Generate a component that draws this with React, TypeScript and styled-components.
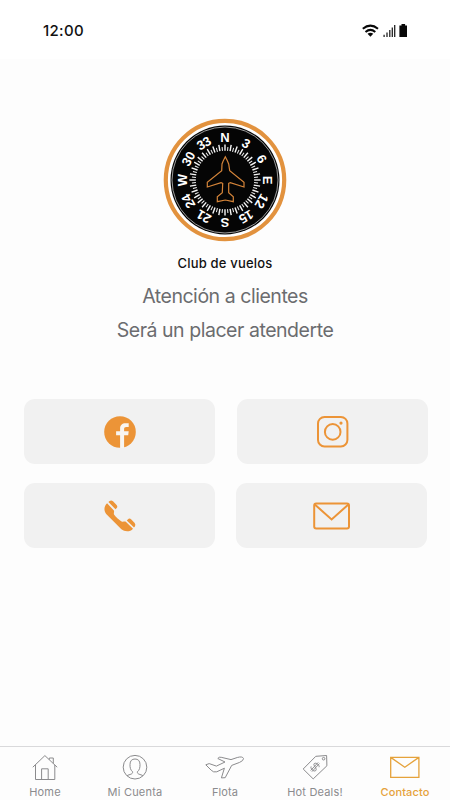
import React from "react";
import styled, { createGlobalStyle } from "styled-components";

const ORANGE = "#ec9437";

const GlobalStyle = createGlobalStyle`
  * { box-sizing: border-box; }
  body { margin: 0; background: #fdfdfd; font-family: Inter, "Liberation Sans", sans-serif; }
  svg { display: block; flex: none; }
`;

const Screen = styled.div`
  width: 450px;
  height: 800px;
  display: flex;
  flex-direction: column;
  background: #fdfdfd;
  overflow: hidden;
`;

const StatusBar = styled.header`
  height: 59px;
  padding: 2px 42px 0 43px;
  display: flex;
  align-items: center;
  justify-content: space-between;
  background: #fff;
`;

const Clock = styled.time`
  font-size: 15px;
  font-weight: 500;
  letter-spacing: 0.3px;
  line-height: 18px;
  color: #111;
`;

const Main = styled.main`
  flex: 1;
  display: flex;
  flex-direction: column;
  align-items: center;
  padding-top: 59px;
`;

const Brand = styled.h1`
  margin: 12px 0 0;
  font-size: 13px;
  line-height: 18px;
  font-weight: 500;
  letter-spacing: 0.2px;
  color: #111;
  white-space: nowrap;
`;

const Message = styled.p`
  margin: 0;
  font-size: 19.5px;
  line-height: 34px;
  font-weight: 400;
  letter-spacing: -0.46px;
  color: #6b6c6f;
  white-space: nowrap;
`;

const Messages = styled.div`
  margin-top: 7px;
  text-align: center;
`;

const Actions = styled.div`
  width: 404px;
  margin: 52px 0 0 2px;
  display: flex;
  flex-direction: column;
  gap: 19px;
`;

const ActionRow = styled.div<{ $gap: number }>`
  display: flex;
  gap: ${(p) => p.$gap}px;
`;

const ActionButton = styled.button`
  width: 191px;
  height: 65px;
  padding: 0;
  border: 0;
  border-radius: 11px;
  background: #f1f1f1;
  display: flex;
  align-items: center;
  justify-content: center;
`;

const TabBar = styled.nav`
  height: 54px;
  border-top: 1px solid #d9d9db;
  display: grid;
  grid-template-columns: repeat(5, 1fr);
`;

const Tab = styled.a<{ $active?: boolean }>`
  display: flex;
  flex-direction: column;
  align-items: center;
  padding-top: 6px;
  color: ${(p) => (p.$active ? "#e5a23b" : "#8b8b8d")};
`;

const TabLabel = styled.span<{ $spacing: number; $active?: boolean }>`
  margin-top: 4px;
  font-size: 11px;
  line-height: 14px;
  font-weight: ${(p) => (p.$active ? 500 : 400)};
  letter-spacing: ${(p) => p.$spacing}px;
  white-space: nowrap;
`;

const HEADINGS = ["N", "3", "6", "E", "12", "15", "S", "21", "24", "W", "30", "33"];

const CompassLogo = () => (
  <svg width="124" height="124" viewBox="0 0 124 124">
    <circle cx="62" cy="62" r="59.2" fill="#fff" stroke="#e2923e" strokeWidth="4.2" />
    <circle cx="62" cy="62" r="54.5" fill="#050505" />
    <circle cx="62" cy="62" r="53" fill="none" stroke="#ddd" strokeWidth="0.7" />
    {Array.from({ length: 72 }, (_, i) => (
      <line
        key={i}
        x1="62"
        x2="62"
        y1={i % 2 ? 28.8 : 26.4}
        y2="32.8"
        stroke="#f6f6f6"
        strokeWidth={i % 2 ? 1 : 1.4}
        transform={`rotate(${i * 5} 62 62)`}
      />
    ))}
    {HEADINGS.map((h, i) => (
      <text
        key={h}
        x="62"
        y="24.2"
        fill="#fff"
        fontFamily="Liberation Sans, sans-serif"
        fontWeight="700"
        fontSize="13"
        letterSpacing={h.length > 1 ? "-0.2" : "0"}
        textAnchor="middle"
        transform={`rotate(${i * 30} 62 62)`}
      >
        {h}
      </text>
    ))}
    <path
      d="M62.3 38.7Q60 43 59 46L58.7 52.7L44.3 64.3V69L58 64.7L59.7 65.3L59.3 74.7L54.3 78.7V83.7L62.3 82L70.3 83.7V78.7L65.7 74.7V65.3L67.3 64.7L81 69V64.3L66.7 52.7L65.7 46Q64.6 43 62.3 38.7Z"
      fill="none"
      stroke="#d48439"
      strokeWidth="1.2"
    />
  </svg>
);

const StatusIcons = () => (
  <svg width="46" height="16" viewBox="0 0 46 16">
    <g fill="none" stroke="#080808" strokeWidth="2">
      <path d="M.8 5.8Q8.4-.6 16 5.8" />
      <path d="M3.5 9Q8.4 4.8 13.3 9" />
    </g>
    <path d="M5.5 10.8Q8.4 8.6 11.3 10.8L8.4 13.8Z" fill="#080808" />
    <path
      d="M22.1 14v-2.3M25 14V9.5M27.8 14V7M30.3 14V4.4M32.7 14V2"
      stroke="#222"
      strokeWidth="1.3"
    />
    <path d="M37.4 2.5h2.1V1h3.6v1.5h1.9V14h-7.6Z" fill="#080808" />
  </svg>
);

const FacebookIcon = () => (
  <svg width="32" height="32" viewBox="0 0 32 32">
    <circle cx="16" cy="16" r="15.8" fill={ORANGE} />
    <path
      d="M16.1 32V19.2h-4v-4h4v-2.6c0-3.4 2-5.3 5.5-5.3h3.1v3.6h-2.4c-1.6 0-2.2.8-2.2 2.1v2.2h4.6l-.5 4h-4.1V32Z"
      fill="#f8f5f1"
    />
  </svg>
);

const InstagramIcon = () => (
  <svg width="32" height="32" viewBox="0 0 32 32" fill="none" stroke={ORANGE} strokeWidth="2">
    <rect x="1" y="1" width="29.4" height="29.4" rx="6.5" />
    <circle cx="15.7" cy="15.9" r="7.8" />
    <circle cx="24" cy="7.1" r="1.6" fill={ORANGE} stroke="none" />
  </svg>
);

const PhoneIcon = () => (
  <svg width="32" height="32" viewBox="0 0 32 32" fill={ORANGE}>
    <path d="M3.1 3.2L9.9 10.5C10.5 12 9.3 13.3 10.2 14.8C12.3 17.5 14.8 19.7 17.6 21.5C19.2 22.4 20.4 21.1 21.8 21.8L29 28.7C26.2 32 20.7 32 17.4 29.3L2.2 14.1C-.4 10.7-.1 6.2 3.1 3.2Z" />
    <path d="M4.4 2.1L5.6 1Q7.3-.2 9 1.3L12.6 5Q14.1 6.9 12.5 8.3L11.5 9.3Z" />
    <path d="M22.8 20.6L23.8 19.4Q25.5 17.8 27.3 19.5L30.7 22.9Q32 24.5 30.9 26.2L30 27.5Z" />
  </svg>
);

const MailIcon = () => (
  <svg width="38" height="28" viewBox="0 0 38 28" fill="none" stroke={ORANGE} strokeWidth="2">
    <rect x="1.2" y="1.4" width="34.8" height="25.2" rx="2" />
    <path d="M1.8 2.5L18.6 17.4L35.4 2.5" />
  </svg>
);

const HomeIcon = () => (
  <svg width="40" height="28" viewBox="0 0 40 28" fill="none" stroke="currentColor">
    <path d="M7.8 14.2L19.9 2.6L32.2 14.2M10.5 12V26.5H29.8V12M16.6 26.5V15.8H23.2V26.5M24.3 6.6V5H28.3V10.4" />
  </svg>
);

const AccountIcon = () => (
  <svg width="40" height="28" viewBox="0 0 40 28" fill="none" stroke="currentColor">
    <circle cx="20" cy="14.2" r="11.8" />
    <path d="M12 22.7C14.5 21.2 18 21.5 17.6 18.8C15.5 17 14.9 14.6 15 11.5C15 7.8 16.9 6 20 6S25 7.8 25 11.5C25.1 14.6 24.5 17 22.4 18.8C22 21.5 25.5 21.2 28 22.7" />
  </svg>
);

const PlaneIcon = () => (
  <svg width="40" height="28" viewBox="0 0 40 28" fill="none" stroke="currentColor" strokeLinejoin="round">
    <path d="M.8 11.8L4.2 10.6L11.4 13.1L20 9L12.8 5.5Q14 3.6 16.2 4.3L26 6.6L32.3 4.5Q37.5 3 38.5 5.5Q38.6 7.7 34.6 9.4L26.7 12.4L20.2 24.7L16.4 24.9L19.4 15.2L11.8 18.8Q8.3 19.7 6.2 17.2Z" />
  </svg>
);

const DealsIcon = () => (
  <svg width="40" height="28" viewBox="0 0 40 28" fill="none" stroke="currentColor">
    <path d="M20.8 3.3L31.6 2.5L31.9 12.8L18.2 25.9L8.2 16Z" />
    <circle cx="28.6" cy="5.7" r="1.3" />
    <g transform="rotate(43 20 14)">
      <path d="M23.1 11.4C22.8 9.6 17.2 9.5 17.1 12.1C17 14.3 23 13.4 23 16C22.9 18.8 17 18.4 16.8 16.2M19.2 8.5V19.5M20.9 8.5V19.5" strokeWidth="0.9" />
    </g>
  </svg>
);

const ContactIcon = () => (
  <svg width="40" height="28" viewBox="0 0 40 28" fill="none" stroke="currentColor" strokeWidth="1.3">
    <path d="M5.7 4.4H33.9V24.4H5.7ZM5.7 4.4L19.8 14.2L33.9 4.4" />
  </svg>
);

const TABS = [
  { label: "Home", Icon: HomeIcon, spacing: 0.15 },
  { label: "Mi Cuenta", Icon: AccountIcon, spacing: 0.2 },
  { label: "Flota", Icon: PlaneIcon, spacing: 0.1 },
  { label: "Hot Deals!", Icon: DealsIcon, spacing: 0.2 },
  { label: "Contacto", Icon: ContactIcon, spacing: 0.1, active: true },
];

export default function App() {
  return (
    <>
      <GlobalStyle />
      <Screen>
        <StatusBar>
          <Clock>12:00</Clock>
          <StatusIcons />
        </StatusBar>
        <Main>
          <CompassLogo />
          <Brand>Club de vuelos</Brand>
          <Messages>
            <Message>Atención a clientes</Message>
            <Message>Será un placer atenderte</Message>
          </Messages>
          <Actions>
            <ActionRow $gap={22}>
              <ActionButton aria-label="Facebook"><FacebookIcon /></ActionButton>
              <ActionButton aria-label="Instagram"><InstagramIcon /></ActionButton>
            </ActionRow>
            <ActionRow $gap={21}>
              <ActionButton aria-label="Teléfono"><PhoneIcon /></ActionButton>
              <ActionButton aria-label="Correo"><MailIcon /></ActionButton>
            </ActionRow>
          </Actions>
        </Main>
        <TabBar>
          {TABS.map(({ label, Icon, spacing, active }) => (
            <Tab key={label} $active={active}>
              <Icon />
              <TabLabel $spacing={spacing} $active={active}>{label}</TabLabel>
            </Tab>
          ))}
        </TabBar>
      </Screen>
    </>
  );
}
